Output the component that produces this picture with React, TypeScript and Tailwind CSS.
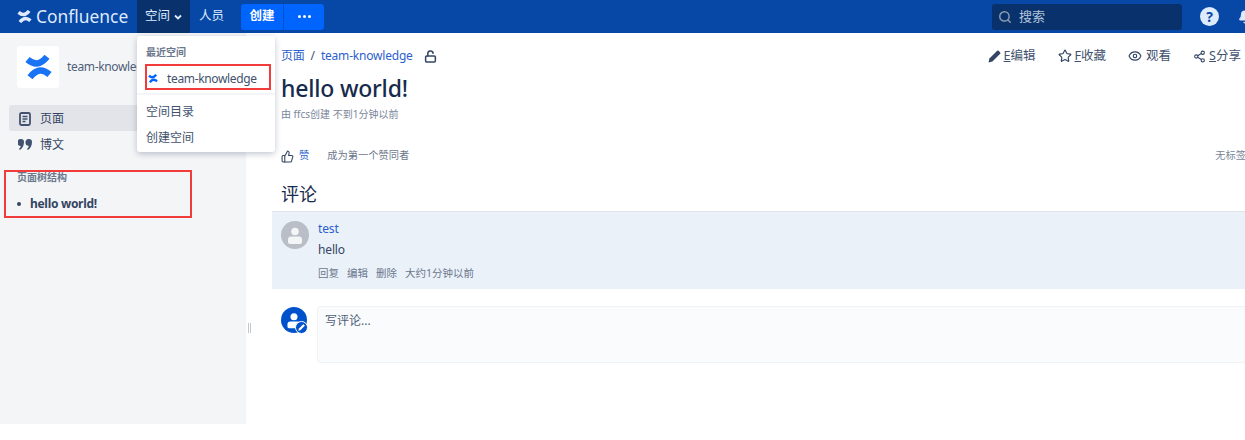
import { Bell, Eye, LockOpen, Search, Share2, Star, ThumbsUp } from 'lucide-react';

const fontStack = "font-['Noto_Sans','Noto_Sans_CJK_SC',sans-serif]";

// Confluence mark, two arcs meeting in the middle
function ConfluenceMark({ width, height, color }: { width: number; height: number; color: string }) {
  return (
    <svg width={width} height={height} viewBox="0 0 27 24" fill="none" stroke={color} strokeWidth="6.500">
      <path d="M2.500 4.500C9 10 15 10.500 22 1.800" />
      <path d="M24.500 19.500C18 14 12 13.500 5 22.200" />
    </svg>
  );
}

function PageIcon() {
  return (
    <svg width="12" height="14" viewBox="0 0 12 14" fill="none">
      <rect x="1" y="1" width="10" height="12" rx="1.500" stroke="#42526e" strokeWidth="1.800" />
      <path d="M3.500 4.500h5M3.500 7h5M3.500 9.500h3" stroke="#42526e" strokeWidth="1.300" />
    </svg>
  );
}

function QuoteIcon() {
  return (
    <svg width="14" height="11" viewBox="0 0 14 11" fill="#42526e">
      <path d="M3 0a3 3 0 0 1 3 3c0 3.500-1.500 6.500-4 8l-1-1c1-1 1.700-2 1.800-3.100A3 3 0 0 1 3 0z" />
      <path d="M11 0a3 3 0 0 1 3 3c0 3.500-1.500 6.500-4 8l-1-1c1-1 1.700-2 1.800-3.100A3 3 0 0 1 11 0z" />
    </svg>
  );
}

function PencilIcon() {
  return (
    <svg width="13" height="13" viewBox="0 0 13 13" fill="#344563">
      <path d="M9.200.8a1 1 0 0 1 1.400 0l1.600 1.600a1 1 0 0 1 0 1.400L4.400 11.600.6 12.400l.8-3.800z" />
    </svg>
  );
}

function UserAvatar({ size, bg, head, body }: { size: number; bg: string; head: string; body: string }) {
  return (
    <svg width={size} height={size} viewBox="0 0 28 28">
      <circle cx="14" cy="14" r="14" fill={bg} />
      <circle cx="14" cy="10.500" r="3.800" fill={head} />
      <path d="M7 18.500a3 3 0 0 1 3-3h8a3 3 0 0 1 3 3V21a2 2 0 0 1-2 2H9a2 2 0 0 1-2-2z" fill={body} />
    </svg>
  );
}

function EditorAvatar() {
  return (
    <div className="relative w-[26px] h-[26px]">
      <UserAvatar size={26} bg="#0052cc" head="#ffffff" body="#ffffff" />
      <div className="absolute right-[-1px] bottom-[-1px] w-[13px] h-[13px] rounded-full bg-[#0052cc] border border-white flex items-center justify-center">
        <svg width="7" height="7" viewBox="0 0 13 13" fill="#ffffff">
          <path d="M9.200.8a1 1 0 0 1 1.400 0l1.600 1.600a1 1 0 0 1 0 1.400L4.400 11.600.6 12.400l.8-3.800z" />
        </svg>
      </div>
    </div>
  );
}

function Header() {
  return (
    <header className="h-[33px] bg-[#0747a6] flex items-center text-[#deebff] shrink-0">
      <div className="flex items-center pl-[17px] w-[137px] gap-[4px]">
        <ConfluenceMark width={15} height={13} color="#deebff" />
        <span className="text-[17.400px] leading-none">Confluence</span>
      </div>
      <div className="w-[53px] h-full bg-[#09326c] flex items-center pl-[8px] gap-[4px] text-[12.500px]">
        空间
        <svg width="8" height="6" viewBox="0 0 8 6" fill="none">
          <path d="M1 1.500l3 3 3-3" stroke="#deebff" strokeWidth="1.800" />
        </svg>
      </div>
      <span className="ml-[9px] text-[12.500px]">人员</span>
      <div className="ml-[17px] h-[26px] w-[83px] rounded-[3px] bg-[#0065ff] flex items-center text-white text-[12.500px] font-bold">
        <span className="w-[43px] h-full flex items-center justify-center border-r border-[#0052cc]">创建</span>
        <span className="flex-1 flex items-center justify-center gap-[2px]">
          <i className="w-[3px] h-[3px] rounded-full bg-white" />
          <i className="w-[3px] h-[3px] rounded-full bg-white" />
          <i className="w-[3px] h-[3px] rounded-full bg-white" />
        </span>
      </div>
      <div className="ml-auto w-[190px] h-[26px] rounded-[3px] bg-[#09326c] flex items-center pl-[6px] gap-[7px] text-[13px] text-[#b3c4dc]">
        <Search size={14} strokeWidth={2.500} className="text-[#8c9bb0]" />
        搜索
      </div>
      <div className="ml-[18px] w-[19px] h-[19px] rounded-full bg-[#deebff] text-[#0747a6] flex items-center justify-center text-[14px] font-bold leading-none">?</div>
      <Bell size={14} fill="#deebff" className="ml-[19px] mr-[-7px] shrink-0 text-[#deebff]" />
    </header>
  );
}

function Sidebar() {
  return (
    <aside className="relative w-[246px] h-[391px] bg-[#f4f5f7] shrink-0 pt-[13px]">
      <div className="flex items-center pl-[17px] gap-[8px]">
        <div className="w-[42px] h-[42px] rounded-[3px] bg-white flex items-center justify-center">
          <ConfluenceMark width={27} height={24} color="#1a73f5" />
        </div>
        <span className="text-[12px] tracking-[-0.350px] text-[#505f79]">team-knowledge</span>
      </div>
      <div className="mt-[17px] mx-[9px] h-[26px] rounded-[3px] bg-[#e2e4e9] flex items-center pl-[10px] pt-[1px] gap-[9px] text-[12px] text-[#344563]">
        <PageIcon />
        页面
      </div>
      <div className="mx-[9px] h-[26px] flex items-center pl-[9px] pt-[1px] gap-[8px] text-[12px] text-[#344563]">
        <QuoteIcon />
        博文
      </div>
      <div className="mt-[13px] pl-[17px] text-[10px] leading-[14px] font-bold text-[#6b778c]">页面树结构</div>
      <div className="mt-[12px] pl-[17px] flex items-center gap-[9px] text-[12px] tracking-[-0.300px] leading-[16px] font-bold text-[#344563]">
        <i className="w-[4px] h-[4px] rounded-full bg-[#344563]" />
        hello world!
      </div>
      <div className="absolute left-[4px] top-[137px] w-[188px] h-[48px] border-[2px] border-[#f23c3c]" />
      <div className="absolute right-[-5px] top-[290px] w-[3px] h-[10px] border-x border-[#c1c7d0]" />
    </aside>
  );
}

function SpaceMenu() {
  return (
    <div className="absolute left-[137px] top-[36px] w-[138px] h-[116px] bg-white rounded-[3px] shadow-[0_2px_6px_rgba(9,30,66,0.25)] text-[#42526e] pt-[9px]">
      <div className="pl-[9px] text-[10px] leading-[14px] font-bold text-[#6b778c]">最近空间</div>
      <div className="relative mt-[5px] h-[26px] ml-[8px] mr-[4px] border-[2px] border-[#f23c3c] flex items-center pl-[1px] pt-[3px] gap-[9px] text-[12px] tracking-[-0.350px]">
        <ConfluenceMark width={10} height={9} color="#0065ff" />
        team-knowledge
      </div>
      <div className="mt-[3px] h-[2px] bg-[#f4f5f7]" />
      <div className="mt-[3px] h-[26px] pl-[9px] pt-[1px] flex items-center text-[12px]">空间目录</div>
      <div className="h-[26px] pl-[9px] pt-[2px] flex items-center text-[12px]">创建空间</div>
    </div>
  );
}

function PageActions() {
  return (
    <div className="ml-auto flex items-center gap-[22px] text-[12.500px] tracking-normal text-[#42526e] whitespace-nowrap mr-[4px]">
      <span className="flex items-center gap-[3px]"><PencilIcon /><span><u>E</u>编辑</span></span>
      <span className="flex items-center gap-[3px]"><Star size={14} strokeWidth={2} className="text-[#344563]" /><span><u>F</u>收藏</span></span>
      <span className="flex items-center gap-[4px]"><Eye size={14} strokeWidth={2} className="text-[#344563]" />观看</span>
      <span className="flex items-center gap-[3px]"><Share2 size={13} strokeWidth={2} className="text-[#344563]" /><span><u>S</u>分享</span></span>
    </div>
  );
}

function Comment() {
  return (
    <section className="ml-[26px] h-[78px] mt-[5px] bg-[#eaf1f9] border-t border-[#dfe4eb] flex pl-[9px] pt-[9px] gap-[9px]">
      <UserAvatar size={28} bg="#b9bec7" head="#f4f5f7" body="#f4f5f7" />
      <div className="text-[12px] tracking-[-0.150px] text-[#344563]">
        <div className="leading-[16px] text-[#2d5fcc]">test</div>
        <div className="mt-[5px] leading-[16px]">hello</div>
        <div className="mt-[8px] flex gap-[8px] text-[10.500px] tracking-normal leading-[14px] text-[#6b778c]">
          <span>回复</span>
          <span>编辑</span>
          <span>删除</span>
          <span>大约1分钟以前</span>
        </div>
      </div>
    </section>
  );
}

export default function App() {
  return (
    <div className={`relative w-[1245px] h-[440px] overflow-hidden bg-white flex flex-col ${fontStack}`}>
      <Header />
      <div className="flex">
        <Sidebar />
        <main className="flex-1 min-w-0">
          <div className="pl-[35px] pt-[14px]">
            <div className="flex items-center h-[18px] text-[12px] tracking-[-0.200px] text-[#2d5fcc]">
              页面
              <span className="mx-[6px] text-[#42526e]">/</span>
              team-knowledge
              <LockOpen size={13} strokeWidth={2.800} className="ml-[11px] text-[#344563]" />
              <PageActions />
            </div>
            <h1 className="mt-[7px] text-[23px] tracking-[-0.200px] leading-[32px] font-medium text-[#172b4d]">hello world!</h1>
            <div className="mt-[3px] text-[10px] leading-[14px] text-[#7a869a]">由 ffcs创建 不到1分钟以前</div>
            <div className="mt-[27px] flex items-center h-[16px] text-[10.250px] text-[#6b778c]">
              <ThumbsUp size={13} strokeWidth={2} className="text-[#344563]" />
              <span className="ml-[5px] text-[#2d5fcc]">赞</span>
              <span className="ml-[18px]">成为第一个赞同者</span>
              <span className="ml-auto -mr-[1px] text-[#7a869a]">无标签</span>
            </div>
            <h2 className="mt-[18px] text-[18px] leading-[24px] text-[#172b4d]">评论</h2>
          </div>
          <Comment />
          <div className="mt-[17px] pl-[35px] flex gap-[10px]">
            <div className="pt-[1px]"><EditorAvatar /></div>
            <div className="flex-1 -mr-[4px] h-[57px] bg-[#fafbfc] border border-[#f1f2f4] rounded-[3px] pl-[7px] pt-[5px] text-[12px] text-[#505f79]">写评论...</div>
          </div>
        </main>
      </div>
      <SpaceMenu />
    </div>
  );
}
